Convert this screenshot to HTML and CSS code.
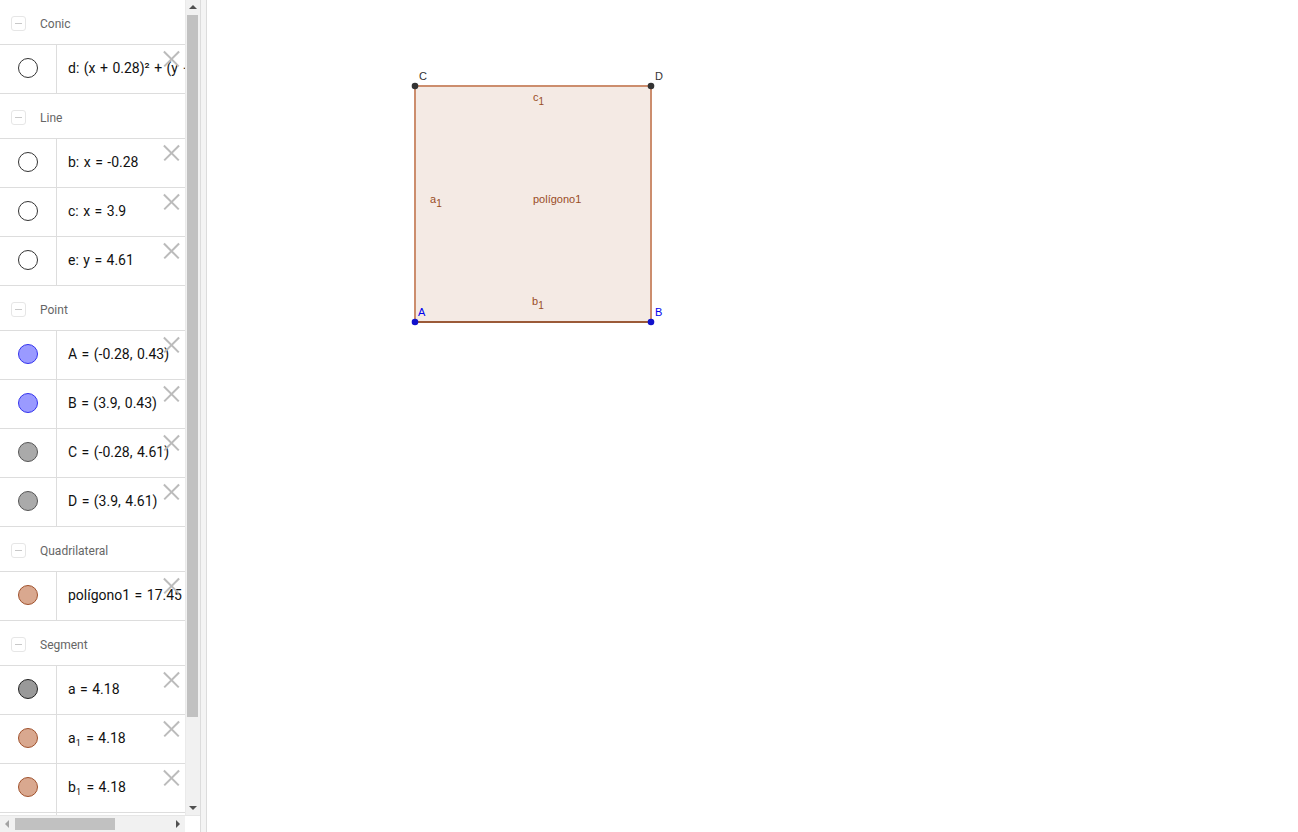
FILE: index.html
```html
<!DOCTYPE html>
<html>
<head>
<meta charset="utf-8">
<link rel="stylesheet" href="styles.css">
</head>
<body>
<div class="app">
  <div class="panel">
    <div class="panel-main">
      <div class="list">
        <div class="group"><span class="minus"></span><span class="gname">Conic</span></div>
        <div class="row"><div class="mark"><span class="dot hollow"></span></div><div class="expr"><span>d: (x + 0.28)² + (y − 2.52)² = 4.14</span></div><span class="del"></span></div>

        <div class="group"><span class="minus"></span><span class="gname">Line</span></div>
        <div class="row"><div class="mark"><span class="dot hollow"></span></div><div class="expr"><span>b: x = -0.28</span></div><span class="del"></span></div>
        <div class="row"><div class="mark"><span class="dot hollow"></span></div><div class="expr"><span>c: x = 3.9</span></div><span class="del"></span></div>
        <div class="row"><div class="mark"><span class="dot hollow"></span></div><div class="expr"><span>e: y = 4.61</span></div><span class="del"></span></div>

        <div class="group"><span class="minus"></span><span class="gname">Point</span></div>
        <div class="row"><div class="mark"><span class="dot blue"></span></div><div class="expr"><span>A = (-0.28, 0.43)</span></div><span class="del"></span></div>
        <div class="row"><div class="mark"><span class="dot blue"></span></div><div class="expr"><span>B = (3.9, 0.43)</span></div><span class="del"></span></div>
        <div class="row"><div class="mark"><span class="dot grey"></span></div><div class="expr"><span>C = (-0.28, 4.61)</span></div><span class="del"></span></div>
        <div class="row"><div class="mark"><span class="dot grey"></span></div><div class="expr"><span>D = (3.9, 4.61)</span></div><span class="del"></span></div>

        <div class="group"><span class="minus"></span><span class="gname">Quadrilateral</span></div>
        <div class="row"><div class="mark"><span class="dot brown"></span></div><div class="expr"><span>polígono1 = 17.45</span></div><span class="del"></span></div>

        <div class="group"><span class="minus"></span><span class="gname">Segment</span></div>
        <div class="row"><div class="mark"><span class="dot dark"></span></div><div class="expr"><span>a = 4.18</span></div><span class="del"></span></div>
        <div class="row"><div class="mark"><span class="dot brown"></span></div><div class="expr"><span>a<sub>1</sub> = 4.18</span></div><span class="del"></span></div>
        <div class="row"><div class="mark"><span class="dot brown"></span></div><div class="expr"><span>b<sub>1</sub> = 4.18</span></div><span class="del"></span></div>
        <div class="row"><div class="mark"></div><div class="expr"></div></div>
      </div>
      <div class="vscroll">
        <div class="arrow up"></div>
        <div class="vthumb"></div>
        <div class="vrest"></div>
        <div class="arrow down"></div>
      </div>
    </div>
    <div class="hscroll">
      <div class="harrow left"></div>
      <div class="hthumb"></div>
      <div class="hrest"></div>
      <div class="harrow right"></div>
      <div class="corner"></div>
    </div>
  </div>
  <div class="splitter"></div>
  <div class="canvas">
    <svg class="graphics" width="1091" height="832" viewBox="207 0 1091 832">
      <rect x="415" y="86" width="236" height="236" fill="#f4eae4"/>
      <line x1="415" y1="86" x2="651" y2="86" stroke="#cc8d6d" stroke-width="2"/>
      <line x1="415" y1="86" x2="415" y2="322" stroke="#cc8d6d" stroke-width="2"/>
      <line x1="651" y1="86" x2="651" y2="322" stroke="#cc8d6d" stroke-width="2"/>
      <line x1="415" y1="322" x2="651" y2="322" stroke="#9b5a38" stroke-width="2"/>
      <circle cx="415" cy="86" r="3.3" fill="#333"/>
      <circle cx="651" cy="86" r="3.3" fill="#333"/>
      <circle cx="415" cy="322" r="3.3" fill="#1111cc"/>
      <circle cx="651" cy="322" r="3.3" fill="#1111cc"/>
      <text x="419" y="80" class="lbl" fill="#333">C</text>
      <text x="655" y="80" class="lbl" fill="#333">D</text>
      <text x="418" y="316" class="lbl" fill="#0000ee">A</text>
      <text x="655" y="316" class="lbl" fill="#0000ee">B</text>
      <text x="533" y="101" class="lbl" fill="#994d26">c<tspan dy="4" font-size="10">1</tspan></text>
      <text x="430" y="203" class="lbl" fill="#994d26">a<tspan dy="4" font-size="10">1</tspan></text>
      <text x="532" y="305" class="lbl" fill="#994d26">b<tspan dy="4" font-size="10">1</tspan></text>
      <text x="533" y="203" class="lbl" fill="#994d26">polígono1</text>
    </svg>
  </div>
</div>
</body>
</html>
```
FILE: styles.css
```css
* { box-sizing: border-box; }
html, body { margin: 0; padding: 0; background: #fff; }
body { width: 1298px; height: 832px; overflow: hidden; font-family: Roboto, "Liberation Sans", sans-serif; }
.app { display: flex; height: 832px; }
.panel { width: 200px; display: flex; flex-direction: column; flex: none; }
.panel-main { display: flex; height: 815px; }
.list { width: 185px; overflow: hidden; }
.group { height: 45px; border-bottom: 1px solid #ddd; display: flex; align-items: center; padding-left: 11px; padding-top: 3px; }
.minus { width: 15px; height: 15px; border: 1px solid #e6e6e6; border-radius: 3px; position: relative; margin-right: 14px; }
.minus::after { content: ""; position: absolute; left: 3px; right: 3px; top: 6px; height: 1px; background: #c8c8c8; }
.gname { font-size: 12px; color: #666; }
.row { height: 49px; border-bottom: 1px solid #ddd; display: flex; position: relative; }
.mark { width: 57px; flex: none; border-right: 1px solid #ddd; display: flex; align-items: center; justify-content: center; padding-bottom: 3px; }
.dot { width: 20px; height: 20px; border-radius: 50%; display: block; }
.dot.hollow { border: 1px solid #333; background: #fff; }
.dot.blue { background: #9a9aff; border: 1px solid #3333ee; }
.dot.grey { background: #aaa; border: 1px solid #555; }
.dot.brown { background: #d9a88f; border: 1px solid #a0522d; }
.dot.dark { background: #999; border: 1px solid #222; }
.expr { padding-left: 11px; display: flex; align-items: center; font-size: 14px; color: #111; white-space: nowrap; word-spacing: 1px; padding-bottom: 3px; }
.expr sub { font-size: 9px; vertical-align: -3px; line-height: 0; margin-right: 1px; }
.del { position: absolute; right: 6px; top: 6px; width: 16px; height: 16px; }
.del::before, .del::after { content: ""; position: absolute; left: -2px; top: 7px; width: 21px; height: 1.5px; background: #bbb; }
.del::before { transform: rotate(45deg); }
.del::after { transform: rotate(-45deg); }
.vscroll { width: 15px; background: #f1f1f1; display: flex; flex-direction: column; border-left: 1px solid #eaeaea; }
.arrow { height: 15px; position: relative; }
.arrow::after { content: ""; position: absolute; left: 3px; border-left: 4px solid transparent; border-right: 4px solid transparent; }
.arrow.up::after { top: 5px; border-bottom: 4px solid #505050; }
.arrow.down::after { top: 6px; border-top: 4px solid #505050; }
.vthumb { height: 702px; margin: 0 2px 0 1px; background: #c1c1c1; }
.vrest { flex: 1; }
.hscroll { height: 17px; display: flex; background: #f1f1f1; border-top: 1px solid #e6e6e6; }
.harrow { width: 15px; position: relative; }
.harrow::after { content: ""; position: absolute; top: 4px; border-top: 4px solid transparent; border-bottom: 4px solid transparent; }
.harrow.left::after { left: 5px; border-right: 4px solid #a3a3a3; }
.harrow.right::after { left: 6px; border-left: 4px solid #505050; }
.hthumb { width: 100px; margin: 2px 0 2px 0; background: #c1c1c1; }
.hrest { width: 55px; }
.corner { width: 15px; background: #fff; }
.splitter { width: 7px; flex: none; background: #f4f4f4; border-left: 1px solid #dcdcdc; border-right: 1px solid #dcdcdc; }
.canvas { flex: 1; position: relative; overflow: hidden; }
.graphics { display: block; }
.lbl { font-family: "Liberation Sans", Arial, sans-serif; font-size: 11px; }
```
